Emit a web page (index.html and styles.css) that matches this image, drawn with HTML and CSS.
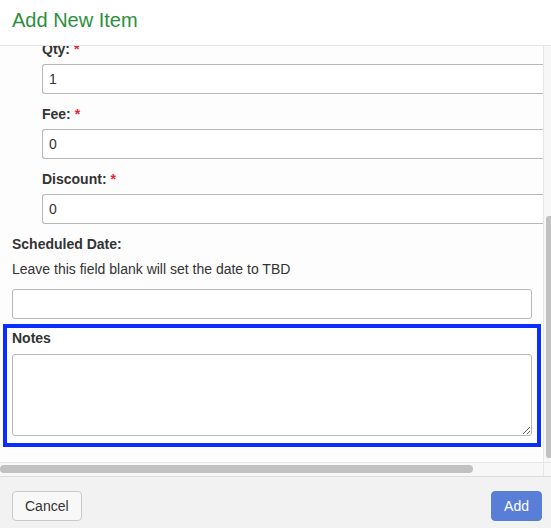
FILE: index.html
```html
<!DOCTYPE html>
<html lang="en">
<head>
<meta charset="utf-8">
<title>Add New Item</title>
<link rel="stylesheet" href="styles.css">
</head>
<body>
<div class="modal">
  <div class="modal-header">
    <h4 class="modal-title">Add New Item</h4>
  </div>
  <div class="modal-body">
    <div class="viewport">
      <form class="form">
        <div class="indent">
          <div class="form-group">
            <label class="label">Qty: <span class="req">*</span></label>
            <input class="control" type="text" value="1">
          </div>
          <div class="form-group">
            <label class="label">Fee: <span class="req">*</span></label>
            <input class="control" type="text" value="0">
          </div>
          <div class="form-group">
            <label class="label">Discount: <span class="req">*</span></label>
            <input class="control" type="text" value="0">
          </div>
        </div>
        <div class="date-group">
          <label class="label">Scheduled Date:</label>
          <p class="help">Leave this field blank will set the date to TBD</p>
          <input class="control" type="text">
        </div>
        <div class="notes-group">
          <label class="label notes-label">Notes</label>
          <textarea class="control notes"></textarea>
        </div>
      </form>
    </div>
    <div class="vbar"><div class="vthumb"></div></div>
    <div class="hbar"><div class="hthumb"></div></div>
    <div class="corner"></div>
  </div>
  <div class="modal-footer">
    <button class="btn btn-default" type="button">Cancel</button>
    <button class="btn btn-primary" type="button">Add</button>
  </div>
</div>
</body>
</html>
```

FILE: styles.css
```css
html, body {
  margin: 0;
  padding: 0;
  height: 100%;
}

body {
  font-family: "Liberation Sans", Arial, Helvetica, sans-serif;
  font-size: 14px;
  color: #333;
  background: #fff;
}

.modal {
  display: flex;
  flex-direction: column;
  height: 100vh;
  overflow: hidden;
}

.modal-header {
  flex: none;
  height: 36px;
  padding: 9px 12px 0;
  border-bottom: 1px solid #e5e5e5;
}

.modal-title {
  margin: 0;
  font-size: 20px;
  line-height: 22px;
  font-weight: normal;
  color: #2b8f3d;
}

.modal-body {
  flex: 1 1 auto;
  min-height: 0;
  display: grid;
  grid-template-columns: 1fr 8px;
  grid-template-rows: 1fr 14px;
  background: #fdfdfd;
}

.viewport {
  min-height: 0;
  min-width: 0;
  overflow: hidden;
  display: flex;
  flex-direction: column;
  justify-content: flex-end;
}

.vbar {
  box-sizing: border-box;
  background: #f7f7f7;
  border-left: 1px solid #e6e6e6;
  display: flex;
  flex-direction: column;
  justify-content: flex-end;
  align-items: flex-end;
}

.vthumb {
  width: 5px;
  height: 242px;
  margin-bottom: 4px;
  background: #c1c1c1;
  border-radius: 3px 0 0 3px;
}

.hbar {
  box-sizing: border-box;
  background: #f7f7f7;
  border-top: 1px solid #e6e6e6;
  padding-top: 2px;
}

.hthumb {
  width: 473px;
  height: 8px;
  background: #c1c1c1;
  border-radius: 4px;
}

.corner {
  background: #f7f7f7;
  border-left: 1px solid #e6e6e6;
  border-top: 1px solid #e6e6e6;
  box-sizing: border-box;
}

.form {
  flex: none;
  margin: 0;
  padding: 0 11px 15px 12px;
}

.form-group {
  margin-bottom: 10px;
}

.label {
  display: block;
  font-weight: bold;
  font-size: 14px;
  line-height: 20px;
  margin-bottom: 5px;
  color: #333;
}

.req {
  color: #e8262a;
}

.control {
  display: block;
  box-sizing: border-box;
  width: 100%;
  height: 30px;
  margin: 0;
  padding: 0 6px;
  border: 1px solid #b8b8b8;
  border-radius: 3px;
  background: #fff;
  font-family: "Liberation Sans", Arial, Helvetica, sans-serif;
  font-size: 14px;
  color: #333;
}

.indent {
  margin-left: 30px;
  width: 569px;
}

.indent .control {
  border-right: none;
  border-radius: 3px 0 0 3px;
}

.help {
  margin: 0 0 10px;
  font-size: 14px;
  line-height: 20px;
  color: #333;
}

.notes-group {
  margin: 5px -9px 0;
  padding: 0 5px 7px;
  border: 4px solid #0a2eff;
  background: #fff;
}

.notes-label {
  margin-bottom: 6px;
}

.notes {
  height: 82px;
  resize: both;
  padding: 6px;
}

.modal-footer {
  flex: none;
  height: 37px;
  border-top: 1px solid #dcdcdc;
  background: #f2f2f2;
  padding: 14px 9px 0 12px;
  display: flex;
  justify-content: space-between;
  align-items: flex-start;
}

.btn {
  height: 30px;
  padding: 0 12px;
  font-family: "Liberation Sans", Arial, Helvetica, sans-serif;
  font-size: 14px;
  border-radius: 4px;
  cursor: pointer;
}

.btn-default {
  background: #f8f8f8;
  border: 1px solid #c9c9c9;
  color: #333;
}

.btn-primary {
  background: #587ed8;
  border: 1px solid #587ed8;
  color: #fff;
}
```
